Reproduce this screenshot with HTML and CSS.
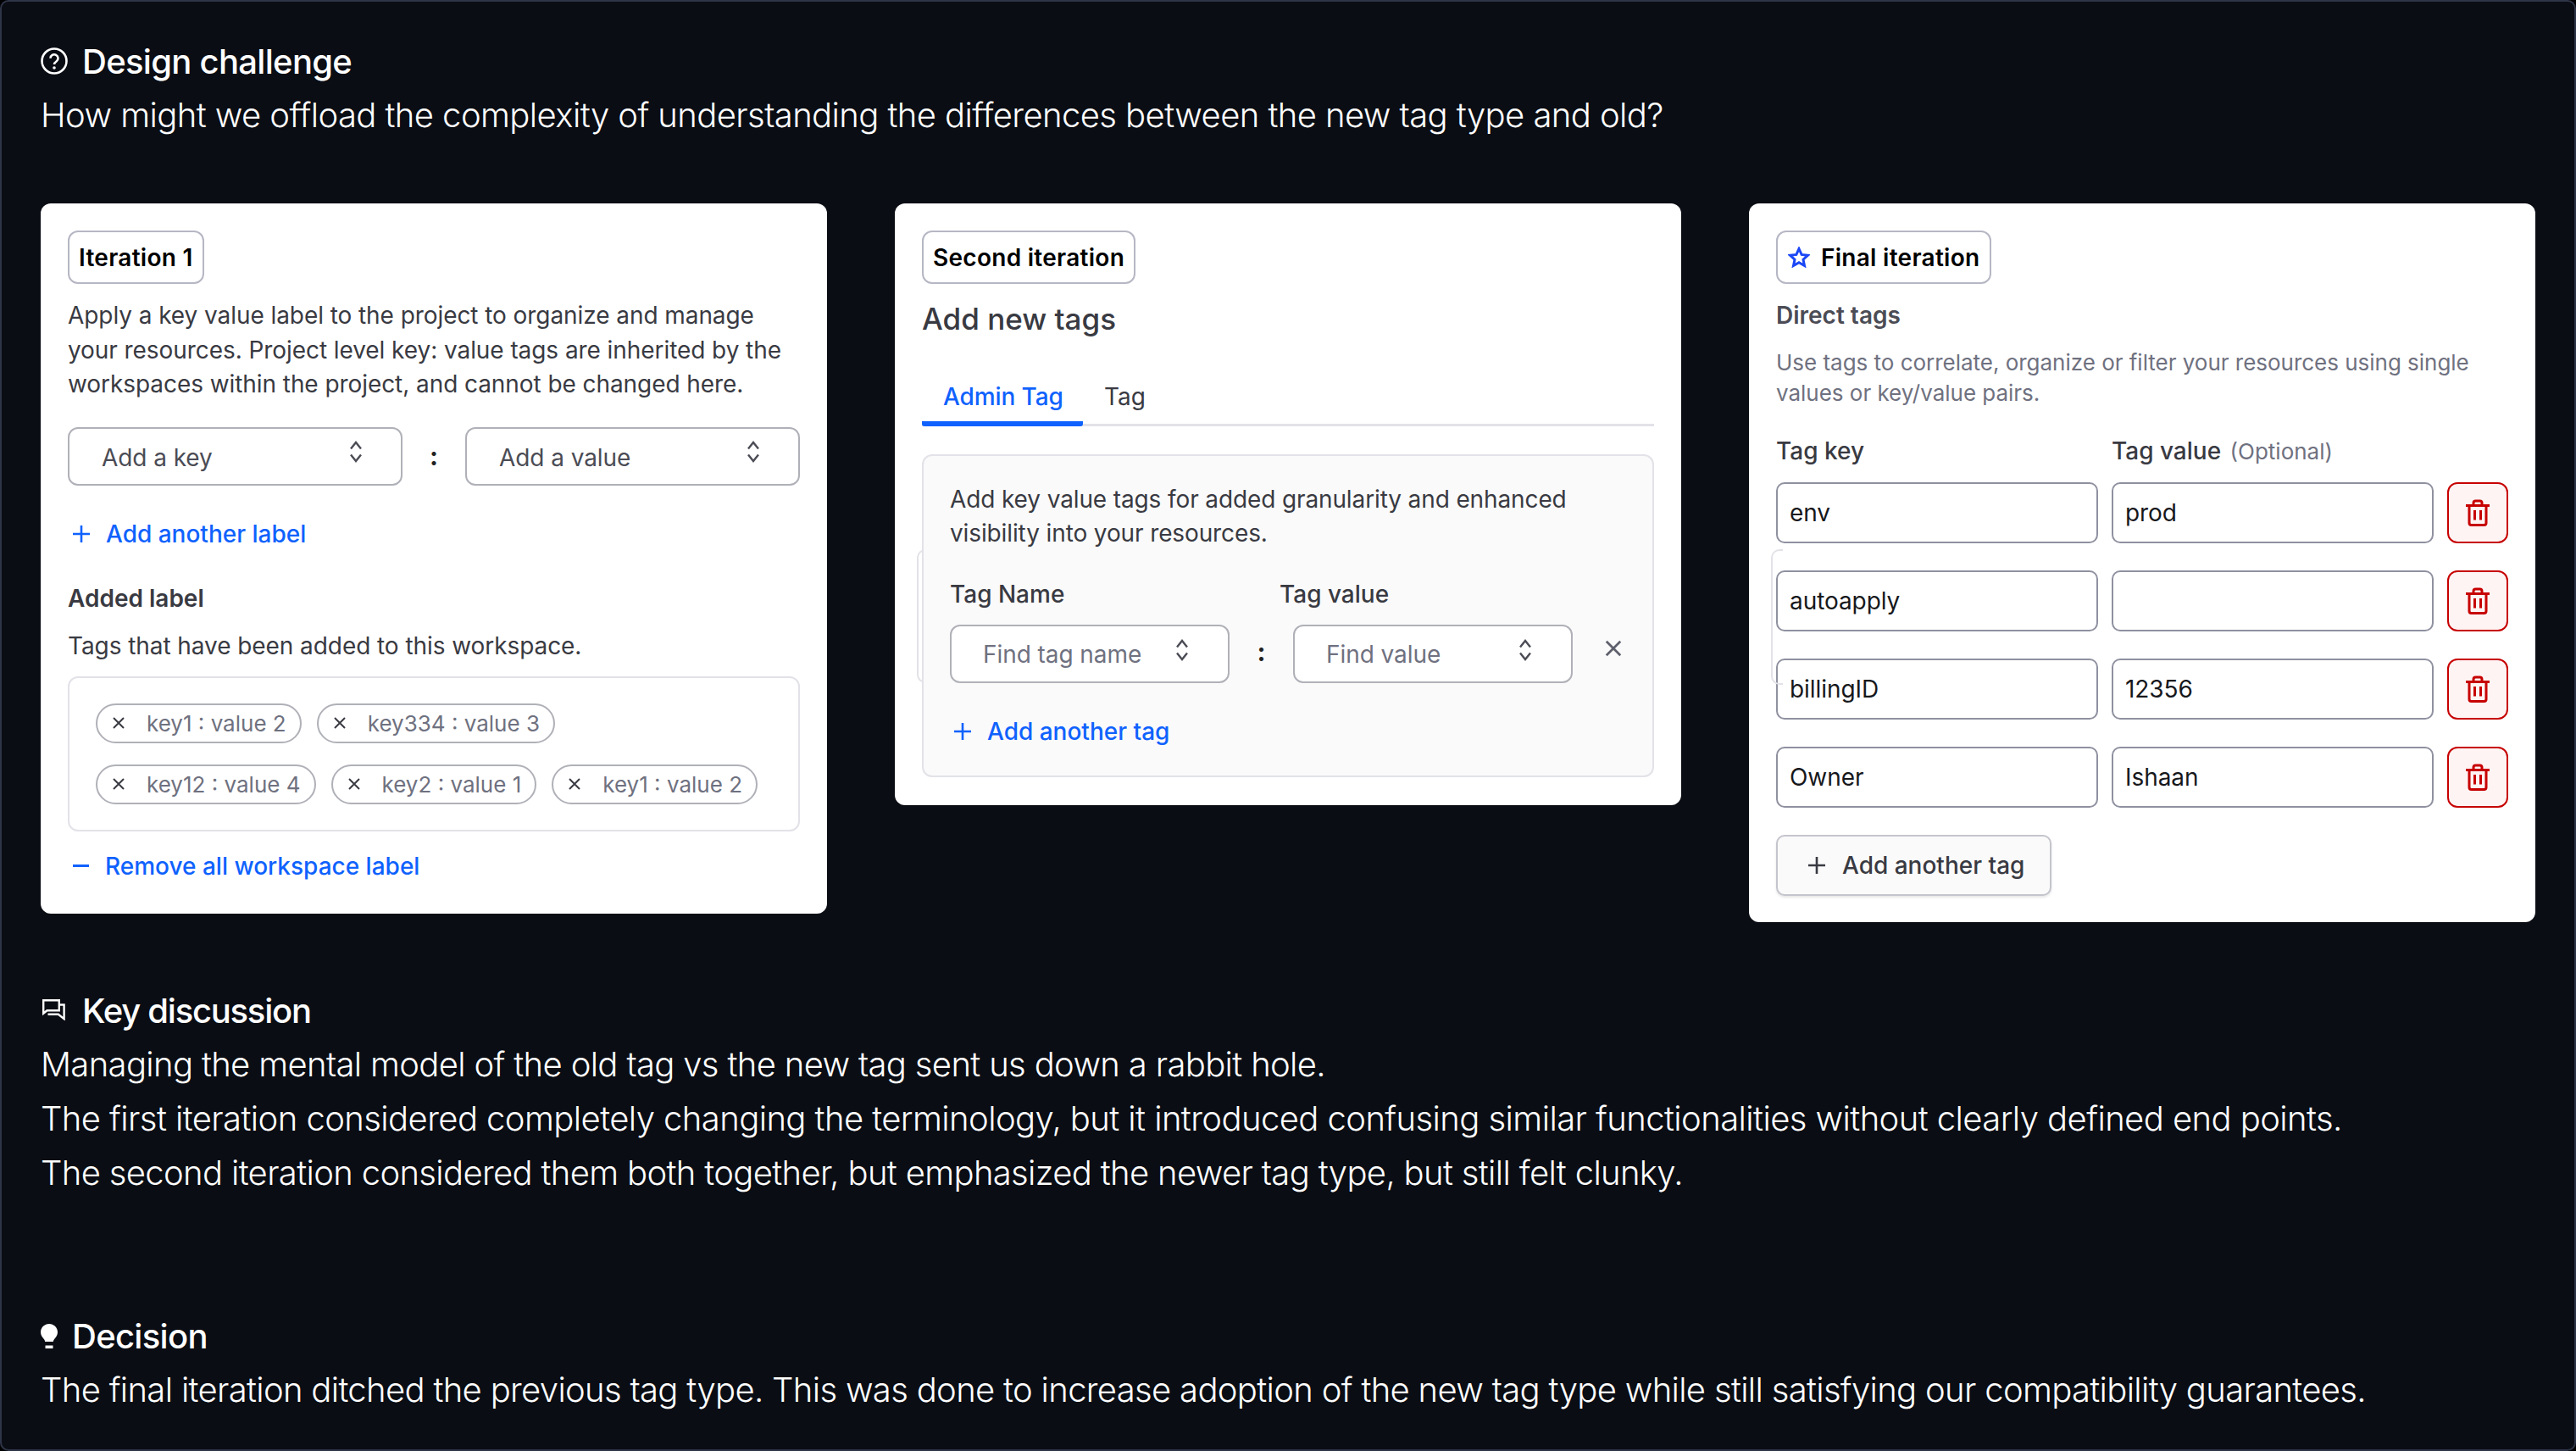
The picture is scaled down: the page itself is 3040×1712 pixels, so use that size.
FILE: index.html
```html
<!DOCTYPE html>
<html lang="en">
<head>
<meta charset="utf-8">
<title>Design challenge</title>
<link rel="stylesheet" href="styles.css">
</head>
<body>
<svg class="defs" width="0" height="0" aria-hidden="true">
  <symbol id="updown" viewBox="0 0 16 26"><path d="M2 9.500 8 2l6 7.500M2 16.500 8 24l6-7.500" fill="none" stroke="currentColor" stroke-width="2.400"/></symbol>
  <symbol id="plus" viewBox="0 0 20 20"><path d="M10 0v20M0 10h20" fill="none" stroke="currentColor" stroke-width="2.600"/></symbol>
  <symbol id="cross" viewBox="0 0 16 16"><path d="M2 2l12 12M14 2 2 14" fill="none" stroke="currentColor" stroke-width="2"/></symbol>
  <symbol id="trash" viewBox="0 0 28 32"><path d="M9 6.500V4.500a2.500 2.500 0 0 1 2.500-2.500h5a2.500 2.500 0 0 1 2.500 2.500v2M0 7.500h28M4 7.500V28a2.500 2.500 0 0 0 2.500 2.500h15A2.500 2.500 0 0 0 24 28V7.500M10.500 13v11.500M17.500 13v11.500" fill="none" stroke="currentColor" stroke-width="3"/></symbol>
</svg>
<main class="frame">
  <h2 class="heading">
    <svg class="ic-question" viewBox="0 0 32 32"><circle cx="16" cy="16" r="14.500" fill="none" stroke="currentColor" stroke-width="2.600"/><path d="M11.500 12.800a4.500 4.500 0 1 1 7 3.700c-1.700 1.100-2.500 2-2.500 3.500" fill="none" stroke="currentColor" stroke-width="2.600"/><circle cx="16" cy="24" r="1.800" fill="currentColor"/></svg>
    Design challenge
  </h2>
  <p class="line line-loose">How might we offload the complexity of understanding the differences between the new tag type and old?</p>

  <div class="cards">
    <section class="card card-a">
      <div class="badge">Iteration 1</div>
      <p class="intro">Apply a key value label to the project to organize and manage your resources. Project level key: value tags are inherited by the workspaces within the project, and cannot be changed here.</p>
      <div class="pick-row">
        <div class="select wide"><span>Add a key</span><svg class="updown"><use href="#updown"/></svg></div>
        <b class="colon">:</b>
        <div class="select wide"><span>Add a value</span><svg class="updown"><use href="#updown"/></svg></div>
      </div>
      <a class="link link-add"><svg class="plus"><use href="#plus"/></svg>Add another label</a>
      <h4 class="sub">Added label</h4>
      <p class="note">Tags that have been added to this workspace.</p>
      <div class="chips">
        <div class="chip-row">
          <span class="chip"><svg class="cross"><use href="#cross"/></svg>key1 : value 2</span>
          <span class="chip"><svg class="cross"><use href="#cross"/></svg>key334 : value 3</span>
        </div>
        <div class="chip-row">
          <span class="chip"><svg class="cross"><use href="#cross"/></svg>key12 : value 4</span>
          <span class="chip"><svg class="cross"><use href="#cross"/></svg>key2 : value 1</span>
          <span class="chip"><svg class="cross"><use href="#cross"/></svg>key1 : value 2</span>
        </div>
      </div>
      <a class="link link-remove"><span class="minus"></span>Remove all workspace label</a>
    </section>

    <section class="card card-b">
      <div class="badge">Second iteration</div>
      <h3 class="title">Add new tags</h3>
      <div class="tabs"><span class="tab active">Admin Tag</span><span class="tab">Tag</span></div>
      <span class="ghost ghost-b"></span>
      <div class="panel">
        <p class="panel-text">Add key value tags for added granularity and enhanced visibility into your resources.</p>
        <div class="labels"><span class="lab-name">Tag Name</span><span>Tag value</span></div>
        <div class="find-row">
          <div class="select find"><span>Find tag name</span><svg class="updown"><use href="#updown"/></svg></div>
          <b class="colon">:</b>
          <div class="select find"><span>Find value</span><svg class="updown"><use href="#updown"/></svg></div>
          <svg class="close"><use href="#cross"/></svg>
        </div>
        <a class="link link-tag"><svg class="plus"><use href="#plus"/></svg>Add another tag</a>
      </div>
    </section>

    <section class="card card-c">
      <div class="badge badge-star">
        <svg class="star" viewBox="0 0 26 25"><path d="M13 2.500l3.100 6.900 7.400.8-5.500 5 1.500 7.300L13 18.800l-6.500 3.700L8 15.200l-5.500-5 7.400-.8z" fill="none" stroke="currentColor" stroke-width="3"/></svg>
        Final iteration
      </div>
      <h4 class="sub-c">Direct tags</h4>
      <p class="desc">Use tags to correlate, organize or filter your resources using single values or key/value pairs.</p>
      <div class="grid">
        <span class="grid-label">Tag key</span>
        <span class="grid-label">Tag value <em>(Optional)</em></span>
        <span></span>
        <div class="field">env</div><div class="field">prod</div><button class="del"><svg class="trash"><use href="#trash"/></svg></button>
        <div class="field">autoapply</div><div class="field"></div><button class="del"><svg class="trash"><use href="#trash"/></svg></button>
        <div class="field">billingID</div><div class="field">12356</div><button class="del"><svg class="trash"><use href="#trash"/></svg></button>
        <div class="field">Owner</div><div class="field">Ishaan</div><button class="del"><svg class="trash"><use href="#trash"/></svg></button>
      </div>
      <span class="ghost ghost-c"></span>
      <button class="add-btn"><svg class="plus"><use href="#plus"/></svg>Add another tag</button>
    </section>
  </div>

  <h2 class="heading heading-key">
    <svg class="ic-chat" viewBox="0 0 27 25"><path d="M1.200 1.200h18.600v12H5.500l-4.300 3.500z M6.500 17.800h12.300l6.800 5.300V6.500h-5.800" fill="none" stroke="currentColor" stroke-width="2.400"/></svg>
    Key discussion
  </h2>
  <p class="line line-tight">Managing the mental model of the old tag vs the new tag sent us down a rabbit hole.</p>
  <p class="line line-loose">The first iteration considered completely changing the terminology, but it introduced confusing similar functionalities without clearly defined end points.</p>
  <p class="line line-tight">The second iteration considered them both together, but emphasized the newer tag type, but still felt clunky.</p>

  <h2 class="heading heading-decision">
    <svg class="ic-bulb" viewBox="0 0 20 29"><path d="M10 0C4.500 0 0 4.300 0 9.700c0 3.300 1.600 5.600 3.300 7.600 1 1.200 1.700 2.300 1.900 3.700h9.600c.2-1.400.9-2.500 1.900-3.700 1.700-2 3.300-4.300 3.300-7.600C20 4.300 15.500 0 10 0zM5.500 25.500h9V29h-9z" fill="currentColor"/></svg>
    Decision
  </h2>
  <p class="line line-tighter">The final iteration ditched the previous tag type. This was done to increase adoption of the new tag type while still satisfying our compatibility guarantees.</p>
</main>
</body>
</html>
```
FILE: styles.css
```css
* { box-sizing: border-box; }
html, body { margin: 0; padding: 0; background: #000; }
body { font-family: Inter, "Liberation Sans", sans-serif; }
.defs { position: absolute; }
.frame {
  width: 3040px; height: 1712px; background: #0a0d14; color: #fff;
  border: 2px solid #2e3548; border-radius: 10px; padding: 38px 46px 0; overflow: hidden;
}
.heading {
  margin: 0; height: 64px; display: flex; align-items: center; gap: 17px;
  font-size: 40px; font-weight: 500; letter-spacing: -0.7px; color: #fff;
}
.line { margin: 0; height: 64px; line-height: 64px; font-size: 40px; font-weight: 300; white-space: nowrap; }
.line-loose { letter-spacing: -0.58px; }
.line-tight { letter-spacing: -0.655px; }
.line-tighter { letter-spacing: -0.675px; }
.ic-question { width: 32px; height: 32px; flex: none; }
.ic-chat { width: 27px; height: 25px; flex: none; margin: -2px 3px 0 2px; }
.ic-bulb { width: 20px; height: 29px; flex: none; margin-left: 0; }
.heading-key { margin-top: 72px; letter-spacing: -1.25px; }
.heading-decision { margin-top: 128px; }

.cards { display: flex; gap: 80px; align-items: flex-start; margin-top: 72px; }
.card { position: relative; width: 928px; background: #fff; border-radius: 12px; padding: 32px; color: #393a42; font-size: 28px; letter-spacing: -0.07px; }
.card-a { height: 838px; }
.card-b { height: 710px; }
.card-c { height: 848px; }
.badge {
  display: inline-flex; align-items: center; height: 63px; padding: 0 11px; border: 2px solid #b6b7c4; border-radius: 12px;
  font-size: 28px; font-weight: 600; letter-spacing: 0.28px; color: #000; background: #fff;
}
.intro { margin: 17px 0 0; line-height: 40.500px; width: 860px; }
.pick-row { display: flex; align-items: center; margin-top: 30px; }
.select { display: flex; align-items: center; justify-content: space-between; background: #fff; border: 2px solid #b0b1b8; border-radius: 12px; color: #4b4c55; }
.select span { position: relative; }
.wide { width: 395px; height: 69px; padding: 0 45px 0 38px; }
.wide span { top: 2px; }
.colon { font-size: 30px; color: #222; text-align: center; font-weight: 700; }
.pick-row .colon { width: 74px; }
.updown { width: 16px; height: 26px; color: #4b4c55; margin-top: -10px; }
.link { display: flex; align-items: center; color: #0f62fe; height: 40px; font-weight: 500; letter-spacing: 0; }
.plus { width: 20px; height: 20px; flex: none; }
.link-add { margin: 37px 0 0 6px; gap: 19px; }
.sub { margin: 36px 0 0; height: 40px; line-height: 40px; font-size: 28px; font-weight: 600; letter-spacing: 0; }
.note { margin: 16px 0 0; line-height: 40px; height: 40px; }
.chips { margin-top: 16px; height: 183px; border: 2px solid #e2e2e8; border-radius: 12px; padding: 30px 31px; display: flex; flex-direction: column; gap: 25px; }
.chip-row { display: flex; gap: 18px; }
.chip { display: inline-flex; align-items: center; height: 47px; border: 2px solid #b0b1b8; border-radius: 24px; padding: 0 16px 0 17px; color: #6f7180; font-size: 26px; letter-spacing: 0; white-space: nowrap; }
.cross { width: 16px; height: 16px; flex: none; color: #393a42; margin-right: 25px; }
.link-remove { margin: 21px 0 0 6px; gap: 19px; }
.minus { width: 19px; height: 3px; background: #0f62fe; flex: none; }

.title { margin: 19px 0 0; font-size: 35px; line-height: 44px; font-weight: 500; letter-spacing: 0; }
.tabs { display: flex; height: 63px; margin-top: 42px; border-bottom: 3px solid #e2e2e8; }
.tab { height: 63px; padding: 8px 26px 0 25px; line-height: 40px; white-space: nowrap; letter-spacing: 0; }
.active { color: #0f62fe; border-bottom: 6px solid #0f62fe; border-radius: 3px; width: 190px; font-weight: 500; flex: none; letter-spacing: -0.1px; }
.ghost { position: absolute; border: 2px solid #e2e2e8; border-right: 0; border-radius: 10px 0 0 10px; width: 14px; }
.ghost-b { left: 26px; top: 408px; height: 158px; }
.ghost-c { left: 26px; top: 408px; height: 160px; }
.panel { position: relative; height: 381px; margin-top: 33px; background: #fafafa; border: 2px solid #e2e2e8; border-radius: 12px; padding: 31px; }
.panel-text { margin: 0; line-height: 40px; width: 780px; letter-spacing: -0.12px; }
.labels { display: flex; margin-top: 32px; font-weight: 500; line-height: 40px; letter-spacing: 0; }
.lab-name { width: 389px; }
.find-row { display: flex; align-items: center; margin-top: 16px; }
.find { width: 330px; height: 69px; padding: 0 46px 0 37px; color: #6f7180; }
.find-row .colon { width: 75px; margin-top: -6px; }
.close { width: 22px; height: 22px; color: #5d5f6b; margin: -14px 0 0 37px; }
.link-tag { margin: 37px 0 0 5px; gap: 19px; }

.badge-star { gap: 13px; padding: 0 12px 0 12px; }
.star { width: 26px; height: 25px; color: #1b47f5; flex: none; }
.sub-c { margin: 17px 0 0; font-size: 28px; line-height: 40px; font-weight: 600; letter-spacing: 0; color: #4b4c55; }
.desc { margin: 18px 0 0; font-size: 26px; line-height: 36px; color: #6f7180; width: 860px; letter-spacing: -0.02px; }
.grid { display: grid; grid-template-columns: 380px 380px 72px; column-gap: 16px; row-gap: 32px; margin-top: 30px; }
.grid-label { font-weight: 500; line-height: 40px; margin-bottom: -16px; letter-spacing: 0; }
.grid-label em { font-style: normal; font-weight: 400; font-size: 26px; color: #6f7180; margin-left: 3px; }
.field { height: 72px; border: 2px solid #8f91a0; border-radius: 10px; background: #fff; padding: 0 14px; display: flex; align-items: center; color: #17181c; font-size: 28px; }
.del { height: 72px; width: 72px; border: 2px solid #c70000; border-radius: 12px; background: #fff4f4; color: #c70000; display: flex; align-items: center; justify-content: center; padding: 0; }
.trash { width: 28px; height: 32px; }
.add-btn { display: flex; align-items: center; gap: 20px; margin-top: 32px; height: 72px; width: 325px; padding: 0 30px 0 36px; background: #fafafa; border: 2px solid #c4c5cd; border-radius: 10px; box-shadow: 0 2px 3px rgba(0,0,0,.1); font: inherit; font-weight: 500; letter-spacing: 0; color: #393a42; white-space: nowrap; }
.add-btn .plus { color: #393a42; }
```
